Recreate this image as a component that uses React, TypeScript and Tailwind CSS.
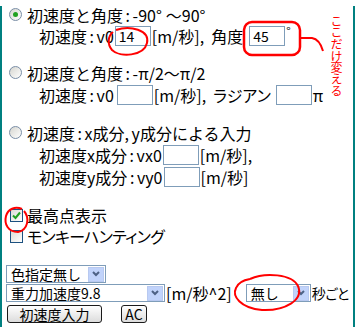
import React from "react";

const F = { fontFamily: '"Noto Sans CJK JP", "Noto Sans", sans-serif' };

function Radio({ checked }: { checked?: boolean }) {
  return (
    <span className="relative inline-flex h-[13px] w-[13px] shrink-0 items-center justify-center rounded-full border border-[#7a8ea6] bg-gradient-to-br from-[#d6d6d0] to-white">
      {checked && <span className="h-[5px] w-[5px] rounded-full bg-[#21a121]" />}
    </span>
  );
}

function Check({ checked }: { checked?: boolean }) {
  return (
    <span className="inline-flex h-[13px] w-[13px] shrink-0 items-center justify-center border border-[#1c5180] bg-gradient-to-br from-[#dcdcd6] to-white">
      {checked && (
        <svg width="9" height="9" viewBox="0 0 9 9">
          <path d="M1 4.5 L3.5 7 L8 1.5" stroke="#21a121" strokeWidth="2" fill="none" />
        </svg>
      )}
    </span>
  );
}

function Input({ value, w = 36 }: { value?: string; w?: number }) {
  return (
    <span
      className="inline-flex h-[20px] shrink-0 items-center border border-[#7f9db9] bg-white px-[3px] text-[14px] leading-none text-black"
      style={{ width: w }}
    >
      {value}
    </span>
  );
}

function Select({ label, w }: { label: string; w: number }) {
  return (
    <span
      className="inline-flex h-[18px] shrink-0 items-center justify-between border border-[#7f9db9] bg-white pl-[4px] pr-[1px] text-[14px] leading-none"
      style={{ width: w }}
    >
      <span>{label}</span>
      <span className="flex h-[15px] w-[16px] items-center justify-center border border-[#b8c9f0] bg-[#c1d3fb]">
        <svg width="8" height="6" viewBox="0 0 8 6">
          <path d="M1 1 L4 4 L7 1" stroke="#4d6185" strokeWidth="2" fill="none" />
        </svg>
      </span>
    </span>
  );
}

function Btn({ children, w }: { children: React.ReactNode; w: number }) {
  return (
    <span
      className="inline-flex h-[18px] items-center justify-center rounded-[3px] border border-[#1a1a1a] bg-gradient-to-b from-white to-[#dcdcdc] text-[14px] leading-none"
      style={{ width: w }}
    >
      {children}
    </span>
  );
}

export default function App() {
  return (
    <div style={F} className="relative h-[326px] w-[355px] border-x-2 border-b-2 border-[#008080] bg-white text-[16px] leading-none text-black">
      {/* section 1 */}
      <div className="mt-[6px] flex h-[17px] items-center gap-[5px] pl-[7px]">
        <Radio checked />
        <span className="[word-spacing:-1px]">初速度と角度 : -90°</span>
        <span className="-ml-[1px]">～90°</span>
      </div>
      <div className="mt-[2px] flex h-[22px] items-center pl-[37px]">
        <span className="[word-spacing:-1px]">初速度 : v0</span>
        <span className="ml-[1px]"><Input value="14" /></span>
        <span className="ml-[1px]">[m/秒],</span>
        <span className="ml-[7px]">角度</span>
        <span className="ml-[6px]"><Input value="45" /></span>
        <span className="ml-[1px] self-start text-[12px]">°</span>
      </div>
      {/* section 2 */}
      <div className="mt-[17px] flex h-[17px] items-center gap-[5px] pl-[7px]">
        <Radio />
        <span className="[word-spacing:-1px]">初速度と角度 : -π/2～π/2</span>
      </div>
      <div className="mt-[3px] flex h-[22px] items-center pl-[37px]">
        <span className="[word-spacing:-1px]">初速度 : v0</span>
        <span className="ml-[3px]"><Input /></span>
        <span className="ml-[1px]">[m/秒],</span>
        <span className="ml-[7px] [font-feature-settings:'palt']">ラジアン</span>
        <span className="ml-[5px]"><Input /></span>
        <span className="ml-[1px]">π</span>
      </div>
      {/* section 3 */}
      <div className="mt-[18px] flex h-[17px] items-center gap-[5px] pl-[7px]">
        <Radio />
        <span className="[word-spacing:-1px]">初速度 : x成分, y成分による入力</span>
      </div>
      <div className="mt-[3px] flex h-[22px] items-center pl-[37px]">
        <span className="[word-spacing:-1px]">初速度x成分 : vx0</span>
        <span className="ml-[1px]"><Input /></span>
        <span className="ml-[1px]">[m/秒],</span>
      </div>
      <div className="flex h-[22px] items-center pl-[37px]">
        <span className="[word-spacing:-1px]">初速度y成分 : vy0</span>
        <span className="ml-[1px]"><Input /></span>
        <span className="ml-[1px]">[m/秒]</span>
      </div>
      {/* checkboxes */}
      <div className="mt-[18px] flex h-[18px] items-center gap-[4px] pl-[8px]">
        <Check checked />
        <span>最高点表示</span>
      </div>
      <div className="mt-[3px] flex h-[18px] items-center gap-[4px] pl-[8px]">
        <Check />
        <span className="tracking-[-0.7px] [font-feature-settings:'palt']">モンキーハンティング</span>
      </div>
      {/* selects */}
      <div className="mt-[20px] flex flex-col gap-[1px] pl-[4px]">
        <div className="flex h-[18px] items-center">
          <Select label="色指定無し" w={100} />
        </div>
        <div className="flex h-[18px] items-center">
          <Select label="重力加速度9.8" w={159} />
          <span className="ml-[1px]">[m/秒^2]</span>
          <span className="ml-[14px]"><Select label="無し" w={65} /></span>
          <span className="ml-[1px] text-[14px] tracking-[-0.5px] [font-feature-settings:'palt']">秒ごと</span>
        </div>
        <div className="mt-[2px] flex h-[18px] items-center gap-[19px] pl-[1px]">
          <Btn w={95}>初速度入力</Btn>
          <Btn w={26}>AC</Btn>
        </div>
      </div>

      {/* annotations */}
      <svg className="pointer-events-none absolute left-[-2px] top-0" width="357" height="327" viewBox="0 0 357 327">
        <path d="M116 24 C 130 19, 150 24, 147 37 C 144 50, 120 52, 112 44 C 107 38, 108 30, 113 26" stroke="#ff0000" strokeWidth="2" fill="none" />
        <rect x="244" y="16" width="56" height="33" rx="8" stroke="#ff0000" strokeWidth="2.5" fill="none" />
        <path d="M300 32 L312 32 C 318 33, 321 38, 323 45" stroke="#ff0000" strokeWidth="2" fill="none" />
        <path d="M24 205 C 30 212, 28 224, 18 226 C 8 226, 4 218, 6 210 C 8 203, 15 200, 22 203" stroke="#ff0000" strokeWidth="2" fill="none" />
        <path d="M250 273 C 265 266, 292 268, 298 280 C 304 294, 285 305, 262 304 C 240 302, 232 290, 236 282 C 238 277, 244 274, 250 273" stroke="#ff0000" strokeWidth="2" fill="none" />
      </svg>
      <div className="absolute left-[328px] top-[9px] text-[12px] leading-[12px] tracking-[-0.3px] text-[#ff0000] [writing-mode:vertical-rl]">
        ここだけ変える
      </div>
    </div>
  );
}
